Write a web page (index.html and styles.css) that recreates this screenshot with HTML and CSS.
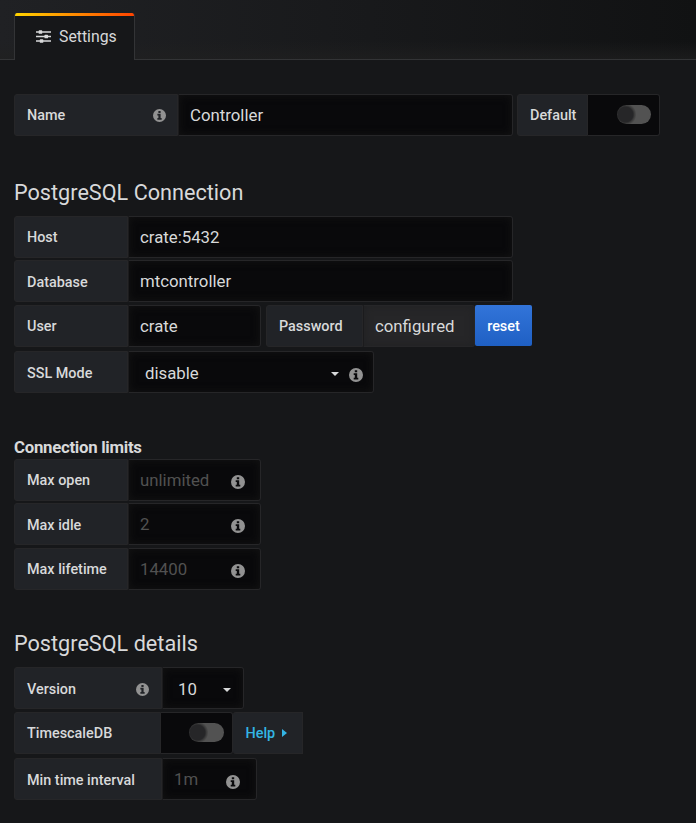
FILE: index.html
```html
<!DOCTYPE html>
<html lang="en">
<head>
<meta charset="utf-8">
<title>Settings</title>
<link rel="stylesheet" href="styles.css">
</head>
<body>
<svg class="defs" aria-hidden="true">
  <symbol id="info" viewBox="0 0 14 14"><path fill-rule="evenodd" d="M7 0a7 7 0 1 0 0 14A7 7 0 0 0 7 0ZM5.8 2.2h2.4v2H5.8ZM4.7 5.2h3.5v4.6h1.1v1.7H4.7V9.8h1.1V6.9H4.7Z"/></symbol>
  <symbol id="caret" viewBox="0 0 8 4"><path d="M0 0h8L4 4Z"/></symbol>
</svg>
<header class="page-header">
  <a class="tab"><svg class="sliders" viewBox="0 0 15 13"><path d="M0 2h15M0 6.5h15M0 11h15" stroke="currentColor" stroke-width="1.3"/><rect x="2.7" y=".3" width="3.5" height="3.5" rx=".6"/><rect x="8.5" y="4.8" width="3.5" height="3.5" rx=".6"/><rect x="3.8" y="9.3" width="3.5" height="3.5" rx=".6"/></svg><span>Settings</span></a>
</header>
<main class="page">
  <section class="group name-group">
    <div class="row">
      <label class="label w-name">Name<svg class="info small"><use href="#info"/></svg></label>
      <div class="field w-name-field">Controller</div>
      <label class="label w-default">Default</label>
      <div class="switch w-switch"><i></i></div>
    </div>
  </section>
  <section class="group connection">
    <h3>PostgreSQL Connection</h3>
    <div class="row"><label class="label w-conn">Host</label><div class="field w-long">crate:5432</div></div>
    <div class="row"><label class="label w-conn low">Database</label><div class="field w-long">mtcontroller</div></div>
    <div class="row">
      <label class="label w-conn">User</label><div class="field w-short">crate</div>
      <label class="label w-pass">Password</label><div class="field configured">configured</div>
      <button class="reset" type="button">reset</button>
    </div>
    <div class="row ssl"><label class="label w-conn low">SSL Mode</label><div class="field select w-ssl">disable<svg class="caret"><use href="#caret"/></svg><svg class="info"><use href="#info"/></svg></div></div>
  </section>
  <section class="group limits">
    <b class="subhead">Connection limits</b>
    <div class="row"><label class="label w-conn">Max open</label><div class="field muted w-short">unlimited<svg class="info"><use href="#info"/></svg></div></div>
    <div class="row"><label class="label w-conn low">Max idle</label><div class="field muted w-short">2<svg class="info"><use href="#info"/></svg></div></div>
    <div class="row"><label class="label w-conn">Max lifetime</label><div class="field muted w-short">14400<svg class="info"><use href="#info"/></svg></div></div>
  </section>
  <section class="group details">
    <h3>PostgreSQL details</h3>
    <div class="row"><label class="label w-detail low">Version<svg class="info small"><use href="#info"/></svg></label><div class="field select w-version">10<svg class="caret"><use href="#caret"/></svg></div></div>
    <div class="row timescale"><label class="label w-tsdb">TimescaleDB</label><div class="switch w-switch"><i></i></div><a class="label help">Help<svg class="arrow" viewBox="0 0 5 8"><path d="M0 0 5 4 0 8Z"/></svg></a></div>
    <div class="row interval"><label class="label w-detail low">Min time interval</label><div class="field muted w-interval">1m<svg class="info"><use href="#info"/></svg></div></div>
  </section>
</main>
</body>
</html>
```
FILE: styles.css
```css
* { box-sizing: border-box; }
body { margin: 0; min-height: 823px; background: #161719; color: #d8d9da; font-family: Roboto, sans-serif; }
svg { display: block; fill: currentColor; flex: none; }
.defs { display: none; }
.page-header { display: flex; height: 60px; padding: 13px 14px 0; border-bottom: 1px solid #333436; background: linear-gradient(0deg, rgba(32,32,32,.65), transparent 18px), linear-gradient(90deg, #202124, #111213); }
.tab { position: relative; display: flex; width: 121px; height: 47px; padding: 0 0 0 21px; align-items: center; border: solid #333436; border-width: 0 1px; border-radius: 3px 3px 0 0; background: #161719; font-size: 15.8px; overflow: hidden; }
.tab::before { content: ""; position: absolute; left: -1px; right: -1px; top: 0; height: 3px; background: linear-gradient(90deg, #ffd500, #ff4400 99%); }
.sliders { width: 15px; height: 13px; margin-right: 8px; }
.page { padding: 34px 14px 0; }
h3 { margin: 0; height: 36px; font-size: 21.65px; font-weight: 400; line-height: 26px; }
.group { display: flex; flex-direction: column; }
.row { display: flex; height: 42px; margin-bottom: 2px; }
.row:nth-child(3) { margin-bottom: 3px; }
.connection { margin-top: 44px; }
.ssl { margin-top: 2px; }
.name-group .row { margin-bottom: 0; }
.label { display: flex; align-items: center; justify-content: space-between; padding: 0 12px; border: 1px solid #262628; border-radius: 3px 0 0 3px; background: #212327; font-size: 14.4px; font-weight: 500; white-space: nowrap; }
.label.low { padding-top: 2px; }
.field { display: flex; align-items: center; padding: 0 11px; border: 1px solid #262628; border-left-color: #1b1b1d; border-radius: 0 3px 3px 0; background: #09090b; box-shadow: inset 0 0 8px #141414; font-size: 16.8px; white-space: nowrap; }
.muted { color: #515151; }
.info { width: 14px; height: 14px; margin: 3px 4px 0 auto; color: #929292; }
.info.small { width: 13px; height: 13px; margin: 0; }
.w-name .info.small { margin-right: -.5px; }
.caret { width: 8px; height: 4px; margin-left: auto; margin-top: 2px; }
.select { padding-left: 16px; }
.w-name { width: 164px; }
.w-name-field { width: 335px; margin-right: 4px; }
.w-default { width: 71px; }
.w-switch { width: 72px; }
.w-conn { width: 114px; }
.w-long { width: 385px; }
.w-short { width: 133px; }
.w-pass { width: 97px; margin-left: 5px; }
.configured { width: 112px; background: #262628; box-shadow: inset 0 0 8px #202123; }
.w-ssl { width: 246px; padding-top: 2px; }
.w-ssl .info { margin: 4px -1px 0 10px; }
.w-detail { width: 148px; }
.w-version { width: 82px; padding-left: 15px; padding-top: 2px; }
.w-version .caret { margin-right: 1px; }
.w-tsdb { width: 147px; }
.w-interval { width: 95px; }
.w-interval .info { margin: 5px 5px 0 auto; }
.switch { display: flex; align-items: center; padding: 0 0 1px 29px; border: 1px solid #262628; border-left: 0; border-radius: 0 3px 3px 0; background: #09090b; }
.timescale .switch { padding-left: 28px; }
.switch i { width: 34px; height: 19px; border-radius: 10px; background: radial-gradient(circle at 8.5px 9.5px, #262628 7.5px, #3c3c3c 9px, #525252 11px); }
.timescale .switch i { width: 35px; }
.reset { width: 57px; height: 41px; padding: 3px 0 0; border: 0; border-radius: 2px; color: #fff; background: linear-gradient(#3274d9, #1f60c4); font: 500 14.4px/18px Roboto, sans-serif; }
.limits { margin-top: 43px; }
.subhead { height: 21px; font-size: 16.8px; font-weight: 700; line-height: 18px; letter-spacing: -.28px; }
.details { margin-top: 39px; }
.details .row:nth-child(2) { margin-bottom: 3px; }
.details .timescale { margin-bottom: 4px; }
.help { width: 70px; padding-left: 12.5px; border-left-width: 0; border-radius: 3px 0 0 3px; color: #33b5e5; justify-content: flex-start; }
.arrow { width: 5px; height: 8px; margin-left: 6.5px; }
```
